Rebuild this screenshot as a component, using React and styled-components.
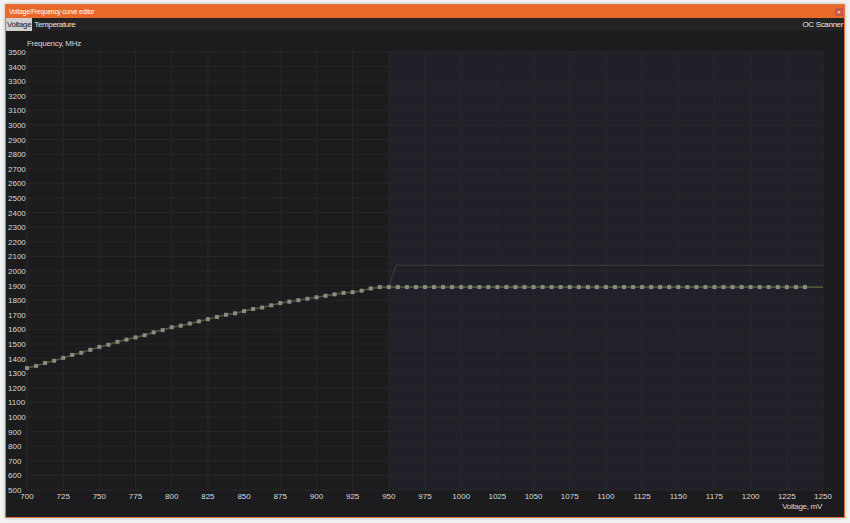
import React from 'react';
import styled, { createGlobalStyle } from 'styled-components';

const GlobalStyle = createGlobalStyle`
    body {
        margin: 0;
        background: #f2f2f2;
        font-family: "Liberation Sans", Arial, sans-serif;
    }
`;

const Page = styled.div`
    padding: 4px 6px 6px 5px;
`;

const Window = styled.div`
    width: 840px;
    height: 514px;
    box-sizing: border-box;
    border: 1px solid #e0773f;
    background: #1c1c1e;
    display: flex;
    flex-direction: column;
    box-shadow: 0 0 3px rgba(0, 0, 0, 0.25);
`;

const TitleBar = styled.div`
    height: 13px;
    background: #e8692a;
    display: flex;
    align-items: center;
    justify-content: space-between;
    padding: 0 1px 0 3px;
    color: #fff;
    font-size: 6.6px;
    letter-spacing: -0.2px;
`;

const CloseButton = styled.div`
    width: 8px;
    height: 8px;
    background: #c9574c;
    color: #fff;
    font-size: 6px;
    line-height: 8px;
    text-align: center;
`;

const MenuBar = styled.div`
    height: 13px;
    background: #232323;
    display: flex;
    align-items: stretch;
    gap: 1px;
    font-size: 8px;
    letter-spacing: -0.35px;
    color: #e6e6e6;
`;

const MenuItem = styled.div`
    padding: 0 1px;
    display: flex;
    align-items: center;
    background: ${(p) => (p.active ? '#cfcfcf' : 'transparent')};
    color: ${(p) => (p.active ? '#1a1a1a' : '#e6e6e6')};
    margin-left: ${(p) => (p.push ? 'auto' : '0')};
`;

const ChartArea = styled.div`
    flex: 1;
    min-height: 0;
`;

//Chart geometry (page coordinates):
const X0 = 27;
const X1 = 823;
const Y0 = 52;
const Y1 = 490;
const MV_MIN = 700;
const MV_MAX = 1250;
const F_MIN = 500;
const F_MAX = 3500;

const xOf = (mv) => X0 + ((mv - MV_MIN) / (MV_MAX - MV_MIN)) * (X1 - X0);
const yOf = (f) => Y1 - ((f - F_MIN) / (F_MAX - F_MIN)) * (Y1 - Y0);

const anchors = [
    [700, 1335],
    [725, 1404],
    [750, 1480],
    [775, 1545],
    [800, 1613],
    [825, 1670],
    [850, 1726],
    [875, 1778],
    [900, 1822],
    [925, 1856],
    [943.75, 1890],
    [1250, 1890],
];

const freqAt = (mv) => {
    for (let i = 0; i < anchors.length - 1; i++) {
        const [a, fa] = anchors[i];
        const [b, fb] = anchors[i + 1];
        if (mv >= a && mv <= b) return fa + ((mv - a) / (b - a)) * (fb - fa);
    }
    return anchors[anchors.length - 1][1];
};

const points = [];
for (let mv = 700; mv <= 1237.5; mv += 6.25) {
    points.push([mv, Math.round(freqAt(mv) / 5) * 5]);
}

const xTicks = [];
for (let mv = MV_MIN; mv <= MV_MAX; mv += 25) xTicks.push(mv);
const yTicks = [];
for (let f = F_MIN; f <= F_MAX; f += 100) yTicks.push(f);

const CurveChart = () => {
    const linePts = [...points, [1250, 1890]]
        .map(([mv, f]) => `${xOf(mv).toFixed(1)},${yOf(f).toFixed(1)}`)
        .join(' ');

    return (
        <svg
            width="838"
            height="485"
            viewBox="6 31 838 485"
            style={{ display: 'block' }}
            fontFamily='"Liberation Sans", Arial, sans-serif'
        >
            <rect x="6" y="31" width="838" height="485" fill="#1c1c1e" />
            <rect x={xOf(950)} y={Y0} width={X1 - xOf(950)} height={Y1 - Y0} fill="#202128" />

            {xTicks.map((mv) => (
                <line key={mv} x1={xOf(mv)} x2={xOf(mv)} y1={Y0} y2={Y1} stroke="#28282b" strokeWidth="1" />
            ))}
            {yTicks.map((f) => (
                <line key={f} x1={X0} x2={X1} y1={yOf(f)} y2={yOf(f)} stroke="#262629" strokeWidth="1" />
            ))}

            <polyline
                points={`${xOf(950)},${yOf(1890)} ${xOf(955)},${yOf(2040)} ${X1},${yOf(2040)}`}
                fill="none"
                stroke="#3d3e42"
                strokeWidth="1"
            />

            <polyline points={linePts} fill="none" stroke="#4a5a30" strokeWidth="1.6" />
            {points.map(([mv, f]) => (
                <rect
                    key={mv}
                    x={xOf(mv) - 2}
                    y={yOf(f) - 2}
                    width="4"
                    height="4"
                    fill="#8a8a8a"
                />
            ))}

            <g fill="#d8d8d8" fontSize="8">
                {yTicks.map((f) => (
                    <text key={f} x="8" y={yOf(f) + 3}>
                        {f}
                    </text>
                ))}
                {xTicks.map((mv) => (
                    <text key={mv} x={xOf(mv)} y="499" textAnchor="middle">
                        {mv}
                    </text>
                ))}
            </g>
            <g fill="#d8d8d8" fontSize="8" letterSpacing="-0.3">
                <text x="27" y="46">Frequency, MHz</text>
                <text x="822" y="509" textAnchor="end">
                    Voltage, mV
                </text>
            </g>
        </svg>
    );
};

const App = () => {
    return (
        <>
            <GlobalStyle />
            <Page>
                <Window>
                    <TitleBar>
                        <span>Voltage/Frequency curve editor</span>
                        <CloseButton>×</CloseButton>
                    </TitleBar>
                    <MenuBar>
                        <MenuItem active>Voltage</MenuItem>
                        <MenuItem>Temperature</MenuItem>
                        <MenuItem push>OC Scanner</MenuItem>
                    </MenuBar>
                    <ChartArea>
                        <CurveChart />
                    </ChartArea>
                </Window>
            </Page>
        </>
    );
};

export default App;
